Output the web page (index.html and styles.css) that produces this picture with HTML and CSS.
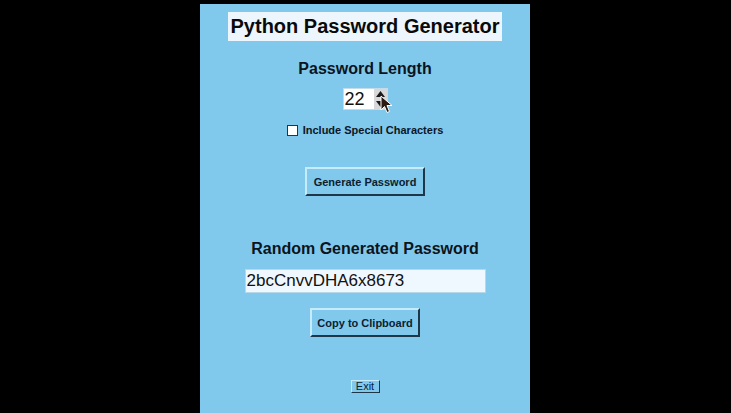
FILE: index.html
```html
<!DOCTYPE html>
<html>
<head>
<meta charset="utf-8">
<link rel="stylesheet" href="styles.css">
</head>
<body>
<div class="panel">
  <div class="title">Python Password Generator</div>
  <div class="label">Password Length</div>
  <div class="spin">
    <span class="spin-value">22</span>
    <span class="spin-arrows">
      <svg width="13" height="20" viewBox="0 0 13 20"><path d="M6.5 2 L11 8 L2 8 Z" fill="#1a1a1a"/><path d="M6.5 18 L11 12 L2 12 Z" fill="#1a1a1a"/></svg>
    </span>
    <svg class="cursor" width="14" height="20" viewBox="0 0 14 20"><path d="M1 1 L1 15 L4.5 11.5 L7 17.5 L9.5 16.5 L7 10.5 L12 10.5 Z" fill="#2a1a12" stroke="#ffffff" stroke-width="1"/></svg>
  </div>
  <label class="check"><span class="box"></span>Include Special Characters</label>
  <div class="btn btn-gen">Generate Password</div>
  <div class="label label-2">Random Generated Password</div>
  <div class="entry">2bcCnvvDHA6x8673</div>
  <div class="btn btn-copy">Copy to Clipboard</div>
  <div class="exit">Exit</div>
</div>
</body>
</html>
```

FILE: styles.css
```css
html, body {
  margin: 0;
  padding: 0;
}
body {
  background: #000;
  width: 731px;
  height: 413px;
  font-family: "Liberation Sans", Arial, sans-serif;
  overflow: hidden;
}
.panel {
  margin: 4px 0 0 200px;
  width: 330px;
  height: 409px;
  background: #80c8ec;
  display: flex;
  flex-direction: column;
  align-items: center;
}
.title {
  margin-top: 8px;
  background: #eef6fd;
  color: #0a0a0a;
  font-weight: bold;
  font-size: 20px;
  line-height: 29px;
  padding: 0 3px;
}
.label {
  margin-top: 19px;
  font-weight: bold;
  font-size: 16px;
  line-height: 18px;
  color: #0c141c;
}
.spin {
  position: relative;
  margin-top: 10px;
  width: 45px;
  height: 22px;
  box-sizing: border-box;
  background: #fff;
  border: 1px solid #c4dcea;
  display: flex;
  align-items: stretch;
}
.spin-value {
  flex: 1;
  font-size: 18px;
  line-height: 20px;
  padding-left: 1px;
  color: #111;
}
.spin-arrows {
  width: 13px;
  background: #d8d8d8;
  display: flex;
  align-items: center;
  justify-content: center;
}
.cursor {
  position: absolute;
  left: 36px;
  top: 6px;
}
.check {
  margin-top: 14px;
  display: flex;
  align-items: center;
  font-weight: bold;
  font-size: 11px;
  line-height: 13px;
  color: #0c1626;
}
.box {
  width: 9px;
  height: 9px;
  background: #fff;
  border: 1px solid #2a3440;
  margin-right: 5px;
}
.btn {
  box-sizing: border-box;
  height: 29px;
  border: 2px solid;
  border-color: #c6ecfb #1d3648 #1d3648 #c6ecfb;
  background: #80c8ec;
  color: #0c1e30;
  font-weight: bold;
  font-size: 11px;
  display: flex;
  align-items: center;
  justify-content: center;
}
.btn-gen {
  margin-top: 30px;
  width: 120px;
}
.label-2 {
  margin-top: 44px;
}
.entry {
  margin-top: 11px;
  width: 241px;
  height: 24px;
  box-sizing: border-box;
  background: #f0f8ff;
  border: 1px solid #b8d8ea;
  font-size: 17px;
  line-height: 22px;
  padding-left: 1px;
  color: #111;
}
.btn-copy {
  margin-top: 15px;
  width: 110px;
}
.exit {
  margin-top: 43px;
  box-sizing: border-box;
  width: 29px;
  height: 13px;
  border: 1px solid;
  border-color: #c6ecfb #1d3648 #1d3648 #c6ecfb;
  font-size: 11px;
  line-height: 11px;
  text-align: center;
  color: #0f2236;
}
```
